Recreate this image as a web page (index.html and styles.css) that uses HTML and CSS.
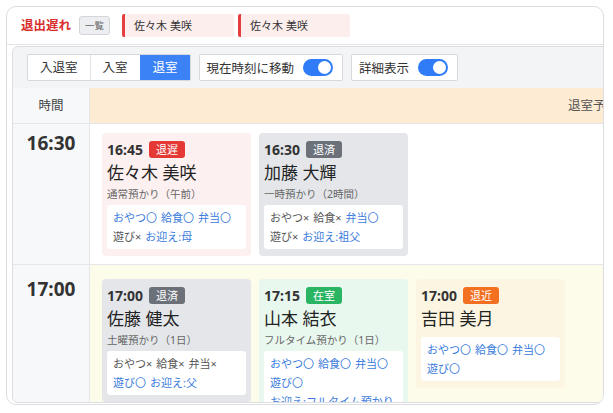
FILE: index.html
```html
<!DOCTYPE html>
<html lang="ja">
<head>
<meta charset="utf-8">
<title>退室</title>
<link rel="stylesheet" href="styles.css">
</head>
<body>
<div class="card">
  <div class="alert-bar">
    <span class="alert-title">退出遅れ</span>
    <button class="mini-btn">一覧</button>
    <span class="chip">佐々木 美咲</span>
    <span class="chip">佐々木 美咲</span>
  </div>
  <div class="panel">
    <div class="toolbar">
      <div class="seg"><span>入退室</span><span>入室</span><span class="active">退室</span></div>
      <div class="tgl-btn">現在時刻に移動<span class="switch"></span></div>
      <div class="tgl-btn">詳細表示<span class="switch"></span></div>
    </div>
    <div class="grid-head">
      <div class="time-h">時間</div>
      <div class="col-h">退室予定</div>
    </div>
    <div class="row">
      <div class="time">16:30</div>
      <div class="slots">
        <div class="entry late">
          <div class="top"><span class="clock">16:45</span><span class="badge red">退遅</span></div>
          <div class="name">佐々木 美咲</div>
          <div class="sub">通常預かり（午前）</div>
          <div class="box"><span class="ok">おやつ〇</span><span class="ok">給食〇</span><span class="ok">弁当〇</span><span class="ng">遊び×</span><span class="ok">お迎え:母</span></div>
        </div>
        <div class="entry done">
          <div class="top"><span class="clock">16:30</span><span class="badge gray">退済</span></div>
          <div class="name">加藤 大輝</div>
          <div class="sub">一時預かり（2時間）</div>
          <div class="box"><span class="ng">おやつ×</span><span class="ng">給食×</span><span class="ok">弁当〇</span><span class="ng">遊び×</span><span class="ok">お迎え:祖父</span></div>
        </div>
      </div>
    </div>
    <div class="row now">
      <div class="time">17:00</div>
      <div class="slots">
        <div class="entry done">
          <div class="top"><span class="clock">17:00</span><span class="badge gray">退済</span></div>
          <div class="name">佐藤 健太</div>
          <div class="sub">土曜預かり（1日）</div>
          <div class="box"><span class="ng">おやつ×</span><span class="ng">給食×</span><span class="ng">弁当×</span><span class="ok">遊び〇</span><span class="ok">お迎え:父</span></div>
        </div>
        <div class="entry in">
          <div class="top"><span class="clock">17:15</span><span class="badge green">在室</span></div>
          <div class="name">山本 結衣</div>
          <div class="sub">フルタイム預かり（1日）</div>
          <div class="box"><span class="ok">おやつ〇</span><span class="ok">給食〇</span><span class="ok">弁当〇</span><span class="ok">遊び〇</span><span class="ok">お迎え:フルタイム預かり</span></div>
        </div>
        <div class="entry near">
          <div class="top"><span class="clock">17:00</span><span class="badge orange">退近</span></div>
          <div class="name">吉田 美月</div>
          <div class="box"><span class="ok">おやつ〇</span><span class="ok">給食〇</span><span class="ok">弁当〇</span><span class="ok">遊び〇</span></div>
        </div>
      </div>
    </div>
  </div>
</div>
</body>
</html>
```

FILE: styles.css
```css
* { box-sizing: border-box; }
body {
  margin: 0;
  background: #fff;
  font-family: "Noto Sans", "Noto Sans CJK JP", sans-serif;
  color: #333;
}
.card {
  width: 598px;
  height: 399px;
  margin: 6px;
  border: 1px solid #dcdde0;
  border-radius: 10px;
  overflow: hidden;
  display: flex;
  flex-direction: column;
  background: #fff;
}
.alert-bar {
  height: 38px;
  flex-shrink: 0;
  border-bottom: 1px solid #e3e4e7;
  display: flex;
  align-items: center;
  padding-left: 14px;
}
.alert-title {
  color: #d92d2d;
  font-weight: 700;
  font-size: 12.5px;
  line-height: 18px;
}
.mini-btn {
  margin-left: 8px;
  height: 19px;
  padding: 0 5px;
  border: 1px solid #d3d5d9;
  background: #eceef1;
  border-radius: 3px;
  font-family: inherit;
  font-size: 9.5px;
  line-height: 17px;
  color: #666;
}
.chip {
  margin-left: 12px;
  height: 23px;
  width: 112px;
  border-left: 3px solid #e53e3e;
  background: #fdeeee;
  padding-left: 9px;
  font-size: 11px;
  line-height: 23px;
  color: #333;
  border-radius: 2px;
}
.chip + .chip { margin-left: 4px; }

.panel {
  flex: 1;
  align-self: flex-start;
  width: 1097px;
  margin: 1px 0 1px 5px;
  border: 1px solid #dcdde1;
  border-radius: 6px;
  background: #f3f4f6;
  overflow: hidden;
}
.toolbar {
  display: flex;
  gap: 8px;
  padding: 7px 14px;
}
.seg {
  display: flex;
  height: 27px;
  border: 1px solid #d5d8dd;
  background: #fff;
  border-radius: 2px;
}
.seg span {
  padding: 0 12px;
  font-size: 12.5px;
  line-height: 25px;
  color: #333;
  border-left: 1px solid #dfe2e6;
}
.seg span:first-child { border-left: 0; }
.seg .active { background: #3b82f6; color: #fff; border-left-color: #3b82f6; }
.tgl-btn {
  display: flex;
  align-items: center;
  gap: 9px;
  height: 27px;
  padding: 0 9px 0 7px;
  border: 1px solid #d5d8dd;
  background: #fff;
  border-radius: 2px;
  font-size: 12.5px;
  color: #333;
}
.switch {
  position: relative;
  width: 30px;
  height: 17px;
  border-radius: 9px;
  background: #2f7cf6;
}
.switch::after {
  content: "";
  position: absolute;
  right: 2px;
  top: 2px;
  width: 13px;
  height: 13px;
  border-radius: 50%;
  background: #fff;
}
.grid-head {
  display: flex;
  height: 36px;
  border-bottom: 1px solid #e4e6ea;
}
.time-h {
  width: 77px;
  flex-shrink: 0;
  border-right: 1px solid #e4e6ea;
  background: #f7f8fa;
  text-align: center;
  line-height: 35px;
  font-size: 12.5px;
  color: #444;
}
.col-h {
  width: 1006px;
  background: #fdebd4;
  text-align: center;
  line-height: 35px;
  font-size: 12.5px;
  color: #555;
}
.row {
  display: flex;
  border-bottom: 1px solid #e4e6ea;
}
.time {
  width: 77px;
  flex-shrink: 0;
  border-right: 1px solid #e4e6ea;
  background: #f7f8fa;
  text-align: center;
  font-weight: 700;
  font-size: 19px;
  line-height: 24px;
  color: #333;
  padding-top: 7px;
}
.slots {
  width: 1006px;
  display: flex;
  align-items: flex-start;
  gap: 8px;
  padding: 9px 12px 8px;
  background: #fff;
}
.row.now .time { padding-top: 12px; }
.row.now .slots { background: #fdfbe9; padding-top: 14px; }

.entry {
  width: 149px;
  padding: 8px 5px 7px;
  border-radius: 4px;
}
.entry.late { background: #fdf0f0; }
.entry.done { background: #e4e6ea; }
.entry.in { background: #e9f8ef; }
.entry.near { background: #fbf5e2; }
.top {
  display: flex;
  align-items: center;
  height: 17px;
}
.clock {
  font-weight: 700;
  font-size: 14px;
  color: #333;
}
.badge {
  margin-left: 6px;
  font-size: 11px;
  line-height: 17px;
  padding: 0 7px;
  color: #fff;
  border-radius: 3px;
}
.badge.red { background: #e53935; }
.badge.gray { background: #6b7079; }
.badge.green { background: #2bb563; }
.badge.orange { background: #f37021; }
.name {
  margin-top: 3px;
  font-size: 17px;
  line-height: 24px;
  color: #222;
}
.sub {
  font-size: 10.5px;
  line-height: 18px;
  color: #666;
}
.box {
  margin-top: 2px;
  background: #fff;
  border-radius: 3px;
  padding: 3px 6px;
  display: flex;
  flex-wrap: wrap;
  column-gap: 4px;
  font-size: 11px;
  line-height: 19px;
}
.name + .box { margin-top: 6px; }
.ok { color: #3a7bdc; }
.ng { color: #555; }
```
